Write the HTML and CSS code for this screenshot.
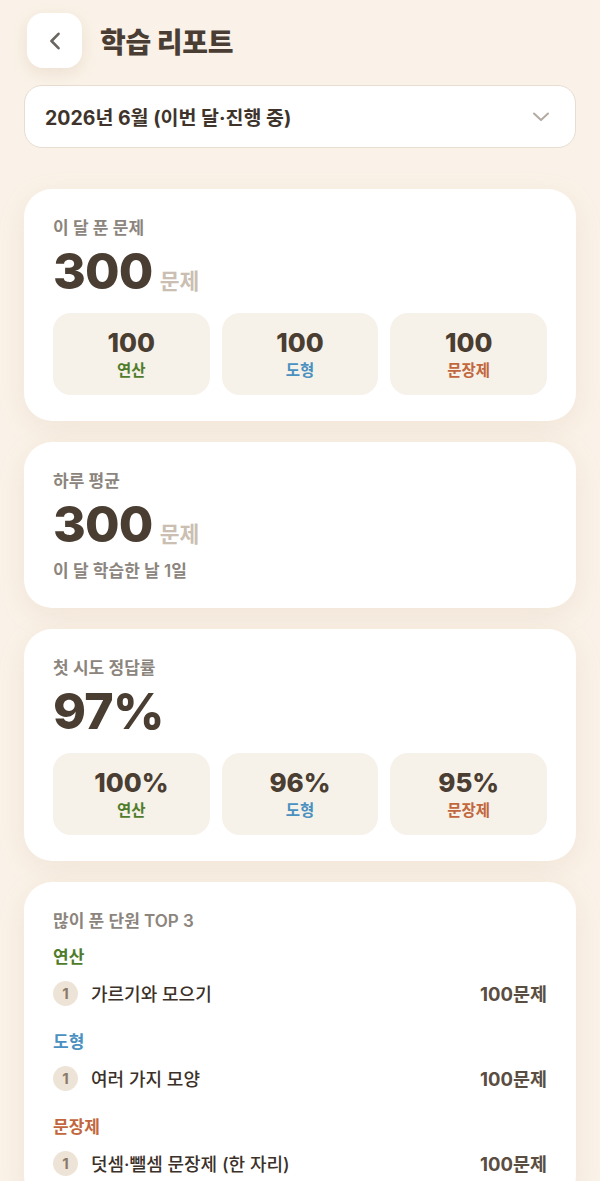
FILE: index.html
```html
<!DOCTYPE html>
<html lang="ko">
<head>
<meta charset="utf-8">
<title>학습 리포트</title>
<link rel="stylesheet" href="styles.css">
</head>
<body>
<div class="app">
  <header class="header">
    <button class="back" aria-label="뒤로">
      <svg width="12" height="18" viewBox="0 0 12 18"><polyline points="9.5,1.8 2.5,9 9.5,16.2" fill="none" stroke="#6b655f" stroke-width="2.6" stroke-linecap="round" stroke-linejoin="round"/></svg>
    </button>
    <h1 class="title">학습 리포트</h1>
  </header>

  <div class="select">
    <span class="select-text">2026년 6월 (이번 달·진행 중)</span>
    <svg width="18" height="12" viewBox="0 0 18 12"><polyline points="2,2.5 9,9 16,2.5" fill="none" stroke="#b3aba2" stroke-width="2" stroke-linecap="round" stroke-linejoin="round"/></svg>
  </div>

  <main class="cards">
    <section class="card">
      <div class="card-label">이 달 푼 문제</div>
      <div class="big"><span class="big-num">300</span><span class="big-unit">문제</span></div>
      <div class="tiles">
        <div class="tile"><div class="tile-num">100</div><div class="tile-label green">연산</div></div>
        <div class="tile"><div class="tile-num">100</div><div class="tile-label blue">도형</div></div>
        <div class="tile"><div class="tile-num">100</div><div class="tile-label orange">문장제</div></div>
      </div>
    </section>

    <section class="card">
      <div class="card-label">하루 평균</div>
      <div class="big"><span class="big-num">300</span><span class="big-unit">문제</span></div>
      <div class="card-sub">이 달 학습한 날 1일</div>
    </section>

    <section class="card">
      <div class="card-label">첫 시도 정답률</div>
      <div class="big"><span class="big-num">97%</span></div>
      <div class="tiles">
        <div class="tile"><div class="tile-num">100%</div><div class="tile-label green">연산</div></div>
        <div class="tile"><div class="tile-num">96%</div><div class="tile-label blue">도형</div></div>
        <div class="tile"><div class="tile-num">95%</div><div class="tile-label orange">문장제</div></div>
      </div>
    </section>

    <section class="card">
      <div class="card-label">많이 푼 단원 TOP 3</div>
      <div class="group group-first">
        <div class="group-title green">연산</div>
        <div class="row"><span class="rank">1</span><span class="unit-name">가르기와 모으기</span><span class="count">100문제</span></div>
      </div>
      <div class="group">
        <div class="group-title blue">도형</div>
        <div class="row"><span class="rank">1</span><span class="unit-name">여러 가지 모양</span><span class="count">100문제</span></div>
      </div>
      <div class="group">
        <div class="group-title orange">문장제</div>
        <div class="row"><span class="rank">1</span><span class="unit-name">덧셈·뺄셈 문장제 (한 자리)</span><span class="count">100문제</span></div>
      </div>
    </section>
  </main>
</div>
</body>
</html>
```

FILE: styles.css
```css
html, body {
  margin: 0;
  padding: 0;
}

body {
  background: #faf2e8;
  font-family: "Inter", "Noto Sans CJK KR", sans-serif;
  color: #4a3d32;
}

.app {
  padding: 13px 24px 40px;
}

.header {
  display: flex;
  align-items: center;
  gap: 18px;
  padding-left: 3px;
  height: 55px;
}

.back {
  width: 55px;
  height: 55px;
  border: none;
  border-radius: 16px;
  background: #ffffff;
  box-shadow: 0 5px 16px rgba(170, 130, 90, 0.16);
  display: flex;
  align-items: center;
  justify-content: center;
  padding: 0;
}

.title {
  margin: 0;
  font-size: 28px;
  font-weight: 800;
  color: #4a3e34;
  letter-spacing: -0.3px;
}

.select {
  margin-top: 17px;
  height: 63px;
  box-sizing: border-box;
  border: 1.5px solid #e7ddd0;
  border-radius: 18px;
  background: #ffffff;
  display: flex;
  align-items: center;
  justify-content: space-between;
  padding: 0 25px 0 20px;
}

.select-text {
  font-size: 19.5px;
  font-weight: 700;
  color: #3e342b;
}

.cards {
  margin-top: 41px;
  display: flex;
  flex-direction: column;
  gap: 21px;
}

.card {
  background: #ffffff;
  border-radius: 28px;
  padding: 28px 29px 26px;
  box-shadow: 0 8px 28px rgba(190, 150, 110, 0.14);
}

.card-label {
  font-size: 17px;
  line-height: 22px;
  font-weight: 600;
  color: #8c857d;
}

.big {
  display: flex;
  align-items: baseline;
  gap: 7px;
  margin-top: 5px;
}

.big-num {
  font-size: 50px;
  line-height: 55px;
  font-weight: 800;
  color: #4a3d32;
  letter-spacing: -0.8px;
}

.big-unit {
  font-size: 21.5px;
  line-height: 1;
  font-weight: 700;
  color: #cabfb2;
}

.tiles {
  display: grid;
  grid-template-columns: repeat(3, 1fr);
  gap: 12px;
  margin-top: 14px;
}

.tile {
  background: #f6f1e9;
  border-radius: 18px;
  padding: 15px 0 13px;
  text-align: center;
}

.tile-num {
  font-size: 26px;
  line-height: 30px;
  font-weight: 800;
  color: #4a3d32;
}

.tile-label {
  margin-top: 2px;
  font-size: 15.5px;
  line-height: 22px;
  font-weight: 600;
}

.card-sub {
  margin-top: 8px;
  font-size: 17px;
  line-height: 22px;
  font-weight: 600;
  color: #8c857d;
}

.green { color: #4f7c2b; }
.blue { color: #4a90c0; }
.orange { color: #c2673d; }

.group-title {
  margin-top: 22px;
  font-size: 17px;
  line-height: 24px;
  font-weight: 700;
}

.group-first .group-title {
  margin-top: 13px;
}

.row {
  display: flex;
  align-items: center;
  height: 30px;
  margin-top: 9px;
}

.rank {
  width: 25px;
  height: 25px;
  border-radius: 50%;
  background: #ede4d7;
  color: #8a7a68;
  font-size: 15px;
  font-weight: 700;
  display: flex;
  align-items: center;
  justify-content: center;
  margin-right: 13px;
  flex: none;
}

.unit-name {
  flex: 1;
  font-size: 18px;
  font-weight: 500;
  color: #3b3129;
}

.count {
  font-size: 18.5px;
  font-weight: 700;
  color: #5a4d41;
}
```
